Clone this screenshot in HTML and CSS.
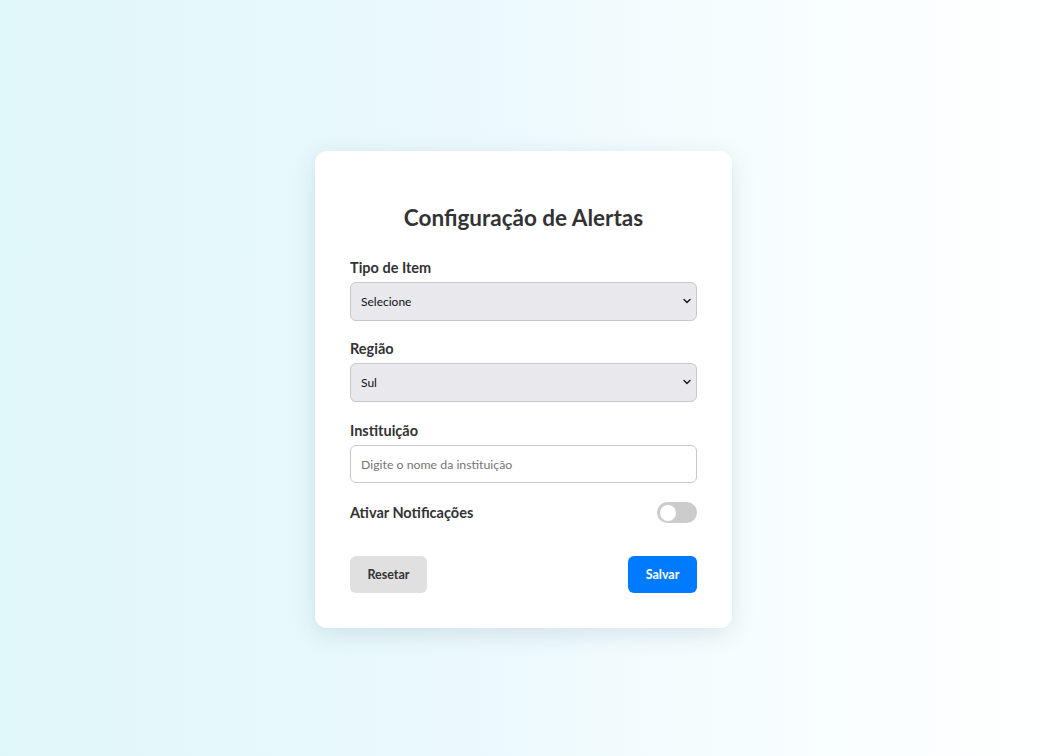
FILE: index.html
```html
<!DOCTYPE html>
<html lang="pt-BR">
<head>
<meta charset="utf-8">
<title>Configuração de Alertas</title>
<link rel="stylesheet" href="styles.css">
</head>
<body>
<main class="page">
  <form class="card">
    <h2 class="title">Configuração de Alertas</h2>
    <div class="group">
      <label class="label" for="tipo">Tipo de Item</label>
      <div class="select-wrap">
        <select id="tipo" class="select"><option>Selecione</option></select>
        <svg class="chev" viewBox="0 0 10 10" width="10" height="10"><path d="M2 3.5 L5 6.5 L8 3.5" fill="none" stroke="#222" stroke-width="1.5" stroke-linecap="round" stroke-linejoin="round"/></svg>
      </div>
    </div>
    <div class="group group-wide">
      <label class="label" for="regiao">Região</label>
      <div class="select-wrap">
        <select id="regiao" class="select"><option>Sul</option></select>
        <svg class="chev" viewBox="0 0 10 10" width="10" height="10"><path d="M2 3.5 L5 6.5 L8 3.5" fill="none" stroke="#222" stroke-width="1.5" stroke-linecap="round" stroke-linejoin="round"/></svg>
      </div>
    </div>
    <div class="group">
      <label class="label" for="inst">Instituição</label>
      <input id="inst" class="input" type="text" placeholder="Digite o nome da instituição">
    </div>
    <div class="toggle-row">
      <span class="label">Ativar Notificações</span>
      <span class="switch"><span class="knob"></span></span>
    </div>
    <div class="actions">
      <button type="button" class="btn btn-reset">Resetar</button>
      <button type="button" class="btn btn-save">Salvar</button>
    </div>
  </form>
</main>
</body>
</html>
```
FILE: styles.css
```css
* { box-sizing: border-box; }
html, body { margin: 0; height: 100%; }
body {
  font-family: Lato, "Noto Sans", sans-serif;
  background: linear-gradient(to right, #e0f7fa 0%, #ebf9fd 45%, #f6fdfe 70%, #ffffff 100%);
  color: #333;
}
.page {
  height: 756px;
  display: flex;
  justify-content: center;
  align-items: center;
  padding: 23px 7px 0 0;
}
.card {
  width: 417px;
  background: #fff;
  border-radius: 12px;
  padding: 35px 35px 35px;
  box-shadow: 0 6px 24px rgba(0, 60, 80, 0.12);
}
.title {
  margin: 18px 0 27px;
  text-align: center;
  font-size: 22.5px;
  line-height: 28px;
  font-weight: 700;
  color: #333;
}
.group { margin-bottom: 19px; }
.group-wide { margin-bottom: 20px; }
.label {
  display: block;
  font-size: 14.5px;
  line-height: 17px;
  font-weight: 700;
  color: #333;
  margin-bottom: 6px;
}
.select-wrap { position: relative; }
.select {
  appearance: none;
  -webkit-appearance: none;
  display: block;
  width: 100%;
  height: 39px;
  padding: 0 10px;
  font-family: Lato, "Noto Sans", sans-serif;
  font-size: 12px;
  color: #111;
  background: #e9e8ed;
  border: 1px solid #c8c8cc;
  border-radius: 6px;
}
.chev {
  position: absolute;
  right: 5px;
  top: 14px;
  pointer-events: none;
}
.input {
  display: block;
  width: 100%;
  height: 38px;
  padding: 0 10px;
  font-family: Lato, "Noto Sans", sans-serif;
  font-size: 12.3px;
  color: #333;
  background: #fff;
  border: 1px solid #c8c8cc;
  border-radius: 6px;
}
.input::placeholder { color: #757575; }
.toggle-row {
  display: flex;
  justify-content: space-between;
  align-items: center;
  height: 21px;
  margin-bottom: 33px;
}
.toggle-row .label { margin-bottom: 0; }
.switch {
  position: relative;
  width: 40px;
  height: 21px;
  border-radius: 11px;
  background: #ccc;
}
.knob {
  position: absolute;
  left: 3px;
  top: 2.5px;
  width: 16px;
  height: 16px;
  border-radius: 50%;
  background: #fff;
}
.actions {
  display: flex;
  justify-content: space-between;
}
.btn {
  height: 37px;
  border: none;
  border-radius: 6px;
  font-family: Lato, "Noto Sans", sans-serif;
  font-size: 12.5px;
  font-weight: 700;
  padding: 0;
}
.btn-reset { background: #e0e0e0; color: #333; width: 77px; }
.btn-save { background: #007bff; color: #fff; width: 69px; }
```
